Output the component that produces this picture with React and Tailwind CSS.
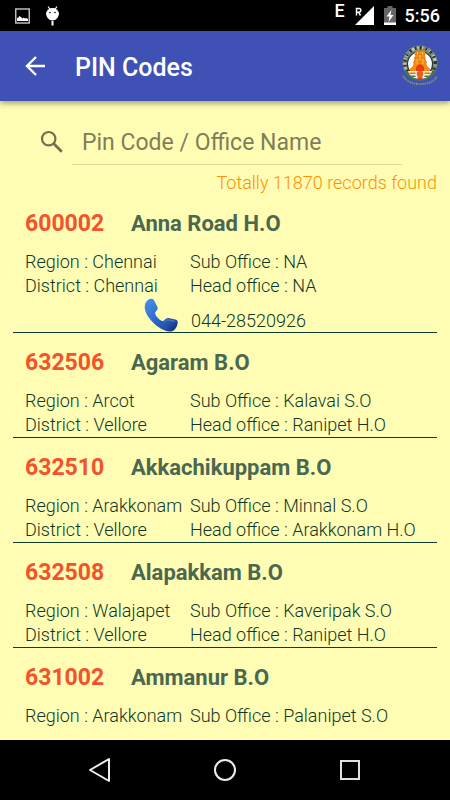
import React from "react";

const offices = [
  { pin: "600002", name: "Anna Road H.O", region: "Chennai", district: "Chennai", sub: "NA", head: "NA", phone: "044-28520926" },
  { pin: "632506", name: "Agaram B.O", region: "Arcot", district: "Vellore", sub: "Kalavai S.O", head: "Ranipet H.O" },
  { pin: "632510", name: "Akkachikuppam B.O", region: "Arakkonam", district: "Vellore", sub: "Minnal S.O", head: "Arakkonam H.O" },
  { pin: "632508", name: "Alapakkam B.O", region: "Walajapet", district: "Vellore", sub: "Kaveripak S.O", head: "Ranipet H.O" },
  { pin: "631002", name: "Ammanur B.O", region: "Arakkonam", sub: "Palanipet S.O" },
];

function StatusBar() {
  return (
    <div className="flex h-[31px] shrink-0 items-center bg-black pr-[10px] pl-[15px] text-white">
      <svg width="15" height="16" viewBox="0 0 15 16" aria-hidden="true">
        <rect x="0.75" y="1" width="13.5" height="14" fill="none" stroke="#c8c8c8" strokeWidth="1.4" />
        <path d="M2 13V10l1.5-.5.8-1.5 1.6 1 1.6 1.4 1.2-.8 1.3.9L11.400 10l1.6 1v2z" fill="#fff" />
      </svg>
      <svg className="ml-4" width="13" height="20" viewBox="0 0 13 20" aria-hidden="true">
        <path d="M2 .5L3.800 3M11 .5L9.200 3" stroke="#fff" strokeWidth="1.200" />
        <path d="M0 7C1 4 3 2 6.500 2S12 4 13 7c0 4-3 7.500-6.500 7.500S0 11 0 7z" fill="#fff" />
        <path d="M6.500 15v4.500" stroke="#fff" strokeWidth="2" />
        <circle cx="4" cy="6.500" r=".8" />
        <circle cx="9" cy="6.500" r=".8" />
      </svg>
      <span className="ml-auto pb-[10px] text-[18px] leading-5 font-medium">E</span>
      <svg className="ml-[10px]" width="19" height="19" viewBox="0 0 19 19" aria-hidden="true">
        <path d="M19 0v19H0z" fill="#fff" />
        <path d="M1.500 9.500V2.500H4a1.700 1.700 0 0 1 0 3.700H1.500M3.500 6.200L5.500 9.500" fill="none" stroke="#fff" strokeWidth="1.500" />
      </svg>
      <svg className="ml-[10px]" width="12" height="19" viewBox="0 0 12 19" aria-hidden="true">
        <path d="M3.500 0h5v2H12v17H0V2h3.500z" fill="#666" />
        <path d="M0 16.500h12V19H0z" fill="#fff" />
        <path d="M7.500 4L2.500 10.500h3L4.500 16l5-7h-3z" fill="#fff" />
      </svg>
      <span className="ml-[9px] pt-px text-[18px] leading-6 font-medium">5:56</span>
    </div>
  );
}

function Emblem() {
  return (
    <svg width="36" height="42" viewBox="0 0 36 42" role="img" aria-label="Government emblem">
      <circle cx="18" cy="18" r="17.500" fill="#75867c" />
      <circle cx="18" cy="18" r="15.200" fill="none" stroke="#c3ccbd" strokeWidth="3" strokeDasharray="2.500 3 1.500 2" />
      <circle cx="18" cy="18" r="15.200" fill="none" stroke="#29352a" strokeWidth="3.500" strokeDasharray="1.500 3.500 2 4" />
      <circle cx="18" cy="19" r="12.500" fill="#fff" stroke="#26372b" strokeWidth="1.200" />
      <path d="M2.500 26h31c-1.500 5-7 9.500-15.500 9.500S4 31 2.500 26z" fill="#4d7048" />
      <path d="M6 26h24c-1 4-5 8-12 8S7 30 6 26z" fill="#f4efdc" />
      <path d="M13 5.500h10v5l1 5 1 5.500 3 2.500V26H8v-2.500l3-2.500 1-5.500 1-5z" fill="#f58a14" />
      <path d="M13 6.500h10M12.500 9.500h11M12 13h12M11 17h14" stroke="#c9741a" strokeWidth=".8" strokeDasharray="2 1" />
      <path d="M15.500 7v3M20.500 7v3M18 10v5M15 14v5M21 14v5" stroke="#ffc040" strokeWidth="1" />
      <path d="M14 22l2-2 2-1 2 1 2 2v4h-8z" fill="#e83c12" />
      <path d="M7.500 27.500h6v1.500h-6zM22.500 27.500h6v1.500h-6z" fill="#e66b25" />
      <path d="M8.500 30.500h5V32h-5zM22.500 30.500h5V32h-5z" fill="#348951" />
      <circle cx="18" cy="29" r="3.300" fill="#ea5b20" />
      <path d="M15.500 33h5" stroke="#ea4b20" strokeWidth="2" />
      <path d="M1 31c3 5 9 8 17 8s14-2 17-8" fill="none" stroke="#7d8c83" strokeWidth="2" strokeDasharray="1.500 .8 2 .6 1 .7" />
    </svg>
  );
}

function PhoneIcon() {
  return (
    <svg width="34" height="34" viewBox="0 0 34 34" aria-hidden="true">
      <defs>
        <linearGradient id="handset" x1="0" y1="0" x2="1" y2="1">
          <stop offset="0" stopColor="#4b91ea" />
          <stop offset=".5" stopColor="#2c66ce" />
          <stop offset=".75" stopColor="#2452a8" />
          <stop offset="1" stopColor="#0f2866" />
        </linearGradient>
      </defs>
      <path d="M0 1.500L5 .5 2 6z" fill="#fff" />
      <path d="M1.500 5C2.500 2.500 5 .8 7.500.8c1.500 0 2.200.8 3 2.400l2.800 5.600c.9 1.700.3 3-1 4.200-1.300 1.200-1.500 2-.8 3.500 1 2.400 3 4.600 5.500 6 1.500.8 2.500.7 3.500-.4 1.300-1.500 2.500-2.300 4.200-2l6.500 1.500c1.800.4 2.600 1.200 2.500 2.900-.3 3.900-2.500 7.700-5.700 8.800-3.500 1-9-1-14-4.500C7.500 24 1.500 16.500.8 10.500.6 8.300.8 6.700 1.500 5z" fill="url(#handset)" />
      <path d="M20.500 24.500c1.500-2 2.700-2.800 4.500-2.500l6 1.500" fill="none" stroke="#4f83d8" strokeWidth="1" />
    </svg>
  );
}

function OfficeRow({ office }) {
  return (
    <li className="border-b border-[#0c3c30] pt-4 pl-[12px] last:border-b-0">
      <h2 className="flex items-baseline leading-7 font-bold text-[#4a6850]">
        <span className="w-[106px] shrink-0 text-[23px] text-[#f4512c]">{office.pin}</span>
        <span className="text-[22px]">{office.name}</span>
      </h2>
      <div className="mt-3 grid grid-cols-[165px_1fr] text-[18px] leading-6 font-light whitespace-nowrap text-[#0c3828]">
        <span>Region : {office.region}</span>
        <span>Sub Office : {office.sub}</span>
        {office.district && <span>District : {office.district}</span>}
        {office.head && <span>Head office : {office.head}</span>}
      </div>
      {office.phone && (
        <a href="tel:04428520926" className="ml-[119px] flex h-[34px] items-start text-[18px] font-light text-[#0c3828]">
          <PhoneIcon />
          <span className="mt-[11px] ml-[13px] leading-6">{office.phone}</span>
        </a>
      )}
    </li>
  );
}

export default function App() {
  return (
    <div className="flex h-screen flex-col overflow-hidden bg-[#fffdb4] font-['Roboto',sans-serif]">
      <StatusBar />
      <header className="z-10 flex h-[70px] shrink-0 items-center bg-[#3f51b5] pr-3 pl-6 text-white shadow-[0_2px_6px_rgba(0,0,0,0.4)]">
        <button type="button" aria-label="Back" className="pb-px">
          <svg width="22" height="22" viewBox="0 0 22 22" fill="none" stroke="#fff" strokeWidth="2.400" aria-hidden="true">
            <path d="M21 11H3M12 2l-9 9 9 9" />
          </svg>
        </button>
        <h1 className="ml-[29px] pt-1 text-[25px] leading-8 font-medium">PIN Codes</h1>
        <div className="ml-auto">
          <Emblem />
        </div>
      </header>
      <main className="min-h-0 flex-1 overflow-hidden px-[13px]">
        <div className="flex pt-[19px] pr-[35px] pl-[27px]">
          <label htmlFor="pin-search" className="mt-[10px] w-[32px] shrink-0">
            <svg width="24" height="24" viewBox="0 0 24 24" fill="none" stroke="#716f4e" strokeWidth="2.200" role="img" aria-label="Search">
              <circle cx="8.700" cy="8.700" r="6.700" />
              <path d="M13.800 13.800l8 8" strokeWidth="2.800" />
            </svg>
          </label>
          <input
            id="pin-search"
            type="text"
            placeholder="Pin Code / Office Name"
            className="h-[45px] min-w-0 flex-1 border-b border-[#dddba0] bg-transparent px-[10px] text-[23px] outline-none placeholder:text-[#807e5a]"
          />
        </div>
        <p className="mt-[6px] text-right text-[18px] leading-6 font-light text-[#ff8f00]">Totally 11870 records found</p>
        <ul className="-mt-px">
          {offices.map((office) => (
            <OfficeRow key={office.pin} office={office} />
          ))}
        </ul>
      </main>
      <nav className="flex h-[60px] shrink-0 justify-center bg-black">
        <button type="button" aria-label="Back" className="flex w-[125px] items-center justify-center">
          <svg width="22" height="24" viewBox="0 0 22 24" fill="none" stroke="#eee" strokeWidth="2" strokeLinejoin="round" aria-hidden="true">
            <path d="M20 1v22L1 12z" />
          </svg>
        </button>
        <button type="button" aria-label="Home" className="flex w-[125px] items-center justify-center">
          <svg width="22" height="22" viewBox="0 0 22 22" fill="none" stroke="#eee" strokeWidth="2" aria-hidden="true">
            <circle cx="11" cy="11" r="10" />
          </svg>
        </button>
        <button type="button" aria-label="Recent apps" className="flex w-[125px] items-center justify-center">
          <svg width="20" height="20" viewBox="0 0 20 20" fill="none" stroke="#e0e0e0" strokeWidth="2" aria-hidden="true">
            <path d="M1 1h18v18H1z" />
          </svg>
        </button>
      </nav>
    </div>
  );
}
